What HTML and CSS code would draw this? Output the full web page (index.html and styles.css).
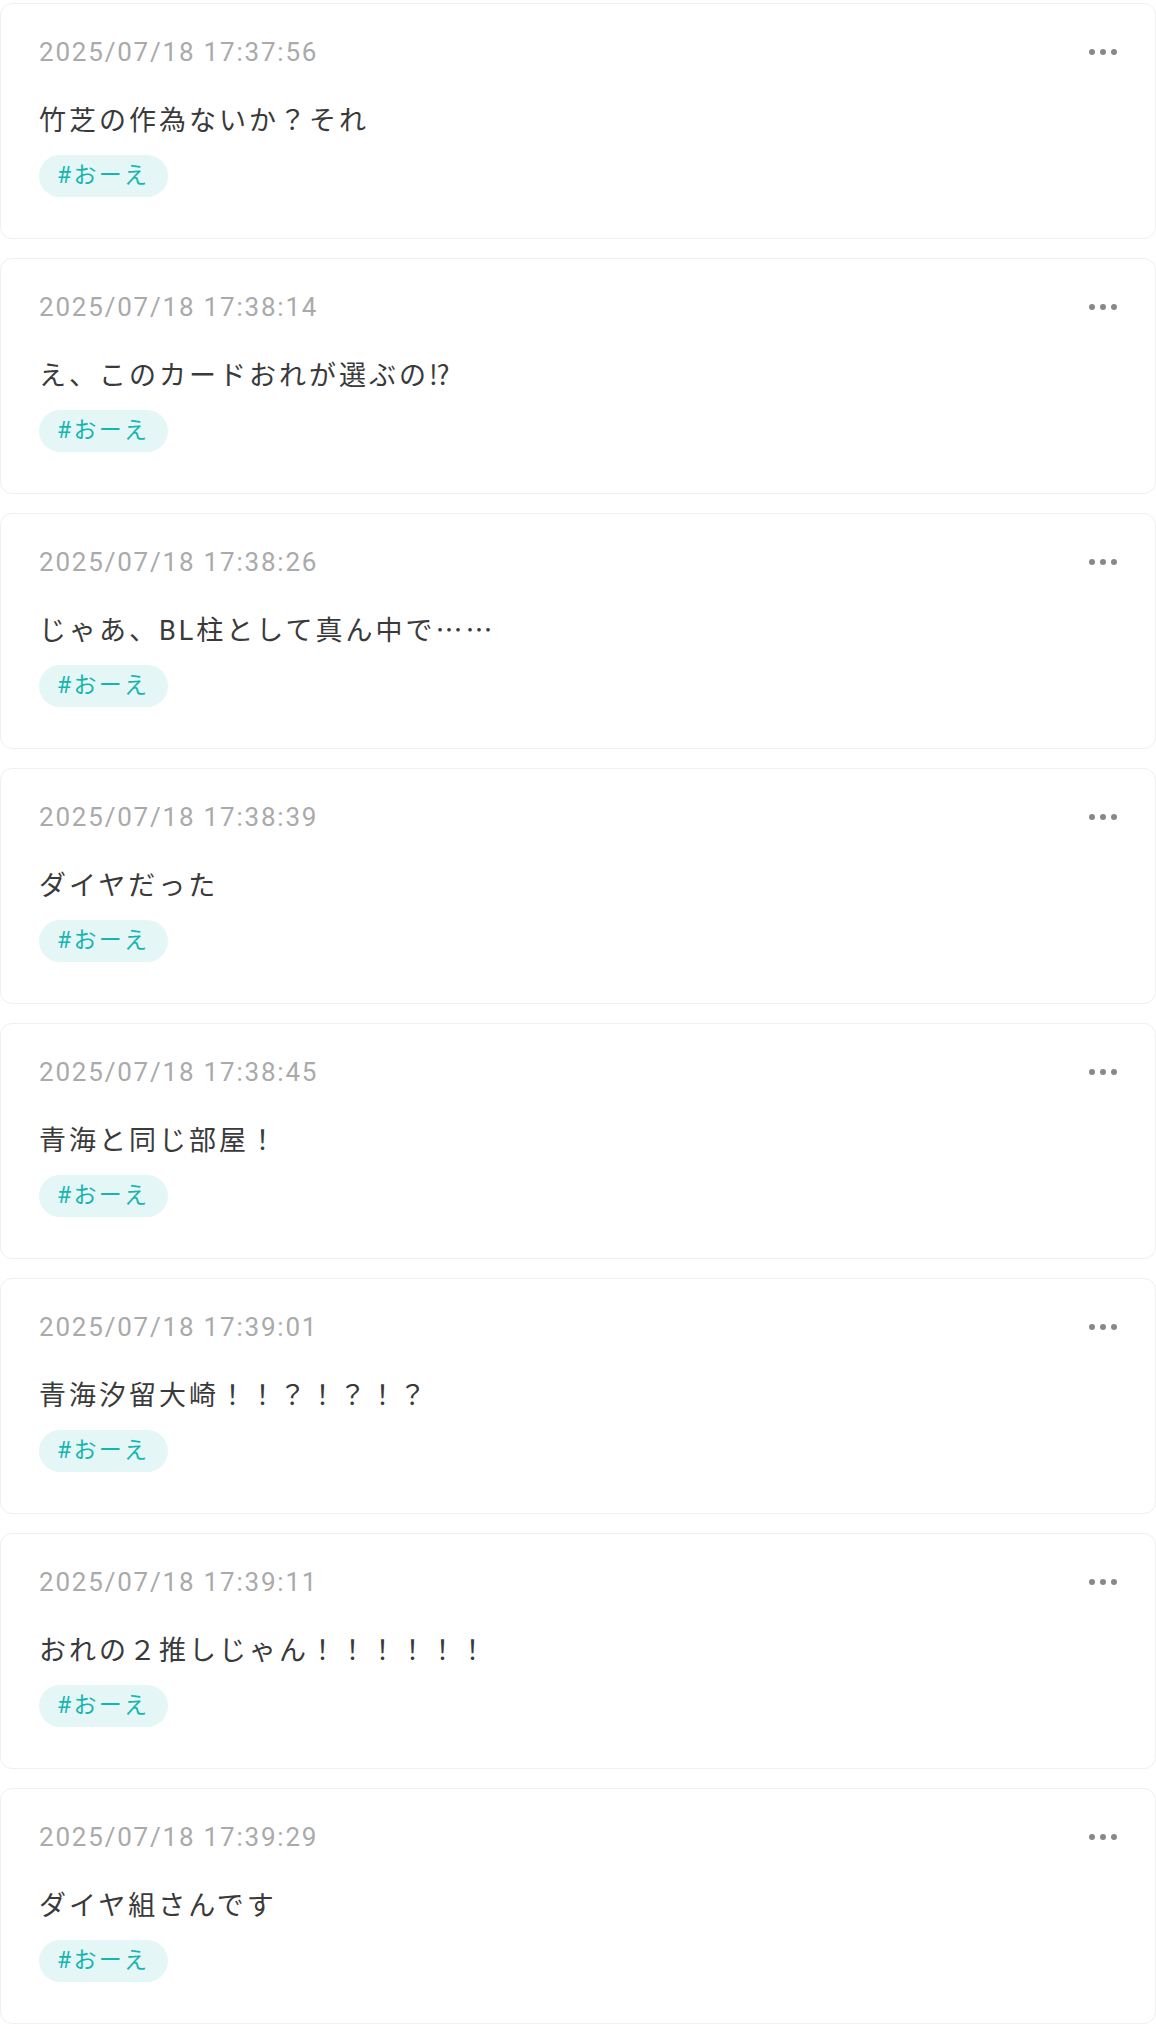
FILE: index.html
```html
<!DOCTYPE html>
<html lang="ja">
<head>
  <meta charset="UTF-8" />
  <title>メモ</title>
  <link rel="stylesheet" href="styles.css">
</head>
<body>
  <div class="list">
    <div class="card">
      <div class="head">
        <span class="time">2025/07/18 17:37:56</span>
        <span class="more"><i></i><i></i><i></i></span>
      </div>
      <p class="text">竹芝の作為ないか？それ</p>
      <span class="tag">#おーえ</span>
    </div>
    <div class="card">
      <div class="head">
        <span class="time">2025/07/18 17:38:14</span>
        <span class="more"><i></i><i></i><i></i></span>
      </div>
      <p class="text">え、このカードおれが選ぶの⁉</p>
      <span class="tag">#おーえ</span>
    </div>
    <div class="card">
      <div class="head">
        <span class="time">2025/07/18 17:38:26</span>
        <span class="more"><i></i><i></i><i></i></span>
      </div>
      <p class="text">じゃあ、BL柱として真ん中で<span class="jp">……</span></p>
      <span class="tag">#おーえ</span>
    </div>
    <div class="card">
      <div class="head">
        <span class="time">2025/07/18 17:38:39</span>
        <span class="more"><i></i><i></i><i></i></span>
      </div>
      <p class="text">ダイヤだった</p>
      <span class="tag">#おーえ</span>
    </div>
    <div class="card">
      <div class="head">
        <span class="time">2025/07/18 17:38:45</span>
        <span class="more"><i></i><i></i><i></i></span>
      </div>
      <p class="text">青海と同じ部屋！</p>
      <span class="tag">#おーえ</span>
    </div>
    <div class="card">
      <div class="head">
        <span class="time">2025/07/18 17:39:01</span>
        <span class="more"><i></i><i></i><i></i></span>
      </div>
      <p class="text">青海汐留大崎！！？！？！？</p>
      <span class="tag">#おーえ</span>
    </div>
    <div class="card">
      <div class="head">
        <span class="time">2025/07/18 17:39:11</span>
        <span class="more"><i></i><i></i><i></i></span>
      </div>
      <p class="text">おれの２推しじゃん！！！！！！</p>
      <span class="tag">#おーえ</span>
    </div>
    <div class="card">
      <div class="head">
        <span class="time">2025/07/18 17:39:29</span>
        <span class="more"><i></i><i></i><i></i></span>
      </div>
      <p class="text">ダイヤ組さんです</p>
      <span class="tag">#おーえ</span>
    </div>
  </div>
</body>
</html>
```

FILE: styles.css
```css
body {
  margin: 0;
  background: #fff;
  font-family: Roboto, "Noto Sans CJK JP", sans-serif;
  color: #333;
}
.list {
  display: flex;
  flex-direction: column;
  gap: 19px;
  padding-top: 3px;
}
.card {
  border: 1px solid #efefef;
  border-radius: 12px;
  padding: 30px 38px 41px;
}
.head {
  display: flex;
  justify-content: space-between;
  align-items: center;
  height: 36px;
}
.time {
  font-size: 26px;
  line-height: 36px;
  color: #aaa;
  letter-spacing: 1.8px;
}
.more {
  display: flex;
  gap: 5px;
}
.more i {
  width: 6px;
  height: 6px;
  border-radius: 50%;
  background: #888;
}
.text {
  margin: 32px 0 14px;
  font-size: 27px;
  line-height: 39px;
  letter-spacing: 3px;
  color: #3a3a3a;
}
.jp {
  font-family: "Noto Sans CJK JP", sans-serif;
  line-height: 1;
}
.tag {
  display: inline-block;
  padding: 0 19px 0 18px;
  height: 42px;
  line-height: 42px;
  border-radius: 21px;
  background: #e4f6f6;
  color: #16b5b0;
  font-size: 23px;
  letter-spacing: 0.1em;
  vertical-align: top;
}
```
